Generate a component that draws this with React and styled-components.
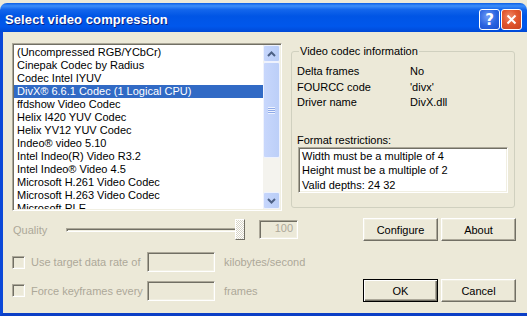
import React from "react";
import styled, { createGlobalStyle } from "styled-components";

const codecs = [
  "(Uncompressed RGB/YCbCr)",
  "Cinepak Codec by Radius",
  "Codec Intel IYUV",
  "DivX® 6.6.1 Codec (1 Logical CPU)",
  "ffdshow Video Codec",
  "Helix I420 YUV Codec",
  "Helix YV12 YUV Codec",
  "Indeo® video 5.10",
  "Intel Indeo(R) Video R3.2",
  "Intel Indeo® Video 4.5",
  "Microsoft H.261 Video Codec",
  "Microsoft H.263 Video Codec",
  "Microsoft RLE",
];

const info = [
  ["Delta frames", "No"],
  ["FOURCC code", "'divx'"],
  ["Driver name", "DivX.dll"],
];

const GlobalStyle = createGlobalStyle`
  html, body {
    margin: 0;
    padding: 0;
    background: #ece9d8;
    overflow: hidden;
  }
  body {
    font-family: "Liberation Sans", Arial, sans-serif;
    font-size: 11px;
    color: #000;
  }
`;

const Window = styled.div`
  width: 527px;
  height: 313px;
  margin-top: 3px;
  display: flex;
  flex-direction: column;
`;

const TitleBar = styled.div`
  height: 29px;
  box-sizing: border-box;
  padding: 4px 5px 0 5px;
  display: flex;
  align-items: center;
  border-radius: 7px 7px 0 0;
  background: linear-gradient(
    to bottom,
    #0a5ee6 0%,
    #3d8ef9 10%,
    #1467ec 22%,
    #0055e5 45%,
    #0057ec 80%,
    #0049d6 100%
  );
`;

const Title = styled.div`
  flex: 1;
  color: #fff;
  font-weight: bold;
  font-size: 13px;
  letter-spacing: 0.1px;
  text-shadow: 1px 1px 0 #0a1f80;
`;

const TitleButtons = styled.div`
  display: flex;
  gap: 1px;
`;

const CaptionButton = styled.div`
  width: 21px;
  height: 21px;
  box-sizing: border-box;
  border: 1px solid #fff;
  border-radius: 3px;
  display: flex;
  align-items: center;
  justify-content: center;
  color: #fff;
  font-weight: bold;
  font-size: 15px;
  font-family: "DejaVu Sans", sans-serif;
  background: ${(p) =>
    p.close
      ? "radial-gradient(circle at 40% 35%, #ee8a6a 0%, #e2572e 45%, #c8421f 100%)"
      : "radial-gradient(circle at 40% 35%, #6f9cf6 0%, #2a63e0 55%, #1a4fcf 100%)"};
`;

const Body = styled.div`
  flex: 1;
  box-sizing: border-box;
  border-left: 3px solid #0b48d8;
  border-bottom: 3px solid #0b3fc6;
  background: #ece9d8;
  display: flex;
  flex-direction: column;
`;

const TopSection = styled.div`
  display: flex;
  align-items: flex-start;
  padding: 11px 0 0 9px;
  gap: 9px;
`;

const sunken = `
  border: 1px solid;
  border-color: #aca899 #fff #fff #aca899;
  box-shadow: inset 1px 1px 0 #716f64, inset -1px -1px 0 #f1efe2;
`;

const ListBox = styled.div`
  width: 270px;
  height: 168px;
  box-sizing: border-box;
  ${sunken}
  padding: 1px;
  background: #fff;
  display: flex;
`;

const Items = styled.div`
  flex: 1;
  overflow: hidden;
  padding-top: 1px;
`;

const Item = styled.div`
  height: 13px;
  line-height: 13px;
  padding-left: 3px;
  white-space: nowrap;
  background: ${(p) => (p.selected ? "#316ac5" : "transparent")};
  color: ${(p) => (p.selected ? "#fff" : "#000")};
`;

const ScrollBar = styled.div`
  width: 17px;
  display: flex;
  flex-direction: column;
  background: #f4f3ee;
`;

const ScrollButton = styled.div`
  height: 17px;
  box-sizing: border-box;
  border: 1px solid #eef2fd;
  border-radius: 2px;
  background: linear-gradient(to right, #c6d6fc, #b9cdf7);
  display: flex;
  align-items: center;
  justify-content: center;
`;

const Thumb = styled.div`
  height: 96px;
  box-sizing: border-box;
  border: 1px solid #eef2fd;
  border-radius: 2px;
  background: linear-gradient(to right, #c8d7fc, #bccff8);
  display: flex;
  align-items: center;
  justify-content: center;
`;

const Grip = styled.div`
  width: 7px;
  height: 7px;
  background: repeating-linear-gradient(
    to bottom,
    #eef3fe 0px,
    #eef3fe 1px,
    #8faae8 1px,
    #8faae8 2px
  );
`;

const Track = styled.div`
  flex: 1;
`;

const GroupBox = styled.fieldset`
  margin: 2px 0 0 0;
  width: 224px;
  height: 163px;
  box-sizing: border-box;
  padding: 0 5px;
  border: 1px solid #d0d0bf;
  border-radius: 3px;
  min-width: 0;
`;

const Legend = styled.legend`
  margin-left: 2px;
  padding: 0 1px;
  line-height: 13px;
`;

const InfoGrid = styled.div`
  display: grid;
  grid-template-columns: 113px 1fr;
  line-height: 15.5px;
  margin-top: 6px;
`;

const RestrictLabel = styled.div`
  margin-top: 23px;
  line-height: 13px;
`;

const RestrictBox = styled.div`
  width: 210px;
  height: 46px;
  margin-left: 1px;
  box-sizing: border-box;
  ${sunken}
  background: #fff;
  padding: 1px 3px;
  line-height: 14.5px;
`;

const Row = styled.div`
  display: flex;
  align-items: center;
  height: ${(p) => p.h}px;
  margin-top: ${(p) => p.mt}px;
  padding: 0 11px 0 9px;
`;

const Disabled = styled.span`
  color: #aca899;
  width: ${(p) => (p.w ? `${p.w}px` : "auto")};
  padding-left: ${(p) => p.pl || 0}px;
  box-sizing: border-box;
  white-space: nowrap;
`;

const Slider = styled.div`
  width: 179px;
  height: 21px;
  display: flex;
  align-items: center;
`;

const SliderTrack = styled.div`
  flex: 1;
  height: 4px;
  box-sizing: border-box;
  ${sunken}
  background: #ece9d8;
`;

const SliderThumb = styled.div`
  width: 10px;
  height: 21px;
  margin-left: -5px;
  box-sizing: border-box;
  border: 1px solid;
  border-color: #fff #716f64 #716f64 #fff;
  background: repeating-conic-gradient(#ffffff 0% 25%, #d8d5c7 0% 50%) 0 0 / 2px 2px;
`;

const Field = styled.div`
  width: ${(p) => p.w}px;
  height: ${(p) => p.h}px;
  margin-left: ${(p) => p.ml || 0}px;
  margin-right: ${(p) => p.mr || 0}px;
  box-sizing: border-box;
  ${sunken}
  background: #ece9d8;
  color: #aca899;
  text-align: right;
  padding: 0 4px;
  line-height: ${(p) => p.h - 4}px;
`;

const CheckBox = styled.div`
  width: 13px;
  height: 13px;
  box-sizing: border-box;
  ${sunken}
  margin-right: 6px;
`;

const ButtonGroup = styled.div`
  margin-left: auto;
  display: flex;
  gap: 3px;
`;

const Button = styled.div`
  width: 75px;
  height: 23px;
  box-sizing: border-box;
  border: 1px solid;
  border-color: ${(p) => (p.primary ? "#000" : "#fff #716f64 #716f64 #fff")};
  box-shadow: ${(p) =>
    p.primary
      ? "inset 1px 1px 0 #fff, inset -1px -1px 0 #716f64, inset -2px -2px 0 #aca899"
      : "inset -1px -1px 0 #aca899, inset 1px 1px 0 #f1efe2"};
  display: flex;
  align-items: center;
  justify-content: center;
  background: #ece9d8;
`;

const Arrow = ({ up }) => (
  <svg width="9" height="6" viewBox="0 0 9 6">
    <polyline
      points={up ? "1,5 4.5,1.5 8,5" : "1,1 4.5,4.5 8,1"}
      fill="none"
      stroke="#4d6185"
      strokeWidth="2"
    />
  </svg>
);

export default function App() {
  return (
    <>
      <GlobalStyle />
      <Window>
        <TitleBar>
          <Title>Select video compression</Title>
          <TitleButtons>
            <CaptionButton>?</CaptionButton>
            <CaptionButton close>
              <svg width="11" height="11" viewBox="0 0 11 11">
                <path d="M1.5 1.5 L9.5 9.5 M9.5 1.5 L1.5 9.5" stroke="#fff" strokeWidth="2" />
              </svg>
            </CaptionButton>
          </TitleButtons>
        </TitleBar>
        <Body>
          <TopSection>
            <ListBox>
              <Items>
                {codecs.map((c, i) => (
                  <Item key={c} selected={i === 3}>
                    {c}
                  </Item>
                ))}
              </Items>
              <ScrollBar>
                <ScrollButton>
                  <Arrow up />
                </ScrollButton>
                <Thumb>
                  <Grip />
                </Thumb>
                <Track />
                <ScrollButton>
                  <Arrow />
                </ScrollButton>
              </ScrollBar>
            </ListBox>
            <GroupBox>
              <Legend>Video codec information</Legend>
              <InfoGrid>
                {info.map(([k, v]) => (
                  <React.Fragment key={k}>
                    <span>{k}</span>
                    <span>{v}</span>
                  </React.Fragment>
                ))}
              </InfoGrid>
              <RestrictLabel>Format restrictions:</RestrictLabel>
              <RestrictBox>
                <div>Width must be a multiple of 4</div>
                <div>Height must be a multiple of 2</div>
                <div>Valid depths: 24 32</div>
              </RestrictBox>
            </GroupBox>
          </TopSection>

          <Row h={23} mt={7}>
            <Disabled w={54} pl={1}>Quality</Disabled>
            <Slider>
              <SliderTrack />
              <SliderThumb />
            </Slider>
            <Field w={39} h={19} ml={14}>100</Field>
            <ButtonGroup>
              <Button>Configure</Button>
              <Button>About</Button>
            </ButtonGroup>
          </Row>

          <Row h={20} mt={11}>
            <CheckBox />
            <Disabled w={116}>Use target data rate of</Disabled>
            <Field w={68} h={20} mr={9} />
            <Disabled>kilobytes/second</Disabled>
          </Row>

          <Row h={23} mt={7}>
            <CheckBox />
            <Disabled w={116}>Force keyframes every</Disabled>
            <Field w={68} h={20} mr={9} />
            <Disabled>frames</Disabled>
            <ButtonGroup>
              <Button primary>OK</Button>
              <Button>Cancel</Button>
            </ButtonGroup>
          </Row>
        </Body>
      </Window>
    </>
  );
}
